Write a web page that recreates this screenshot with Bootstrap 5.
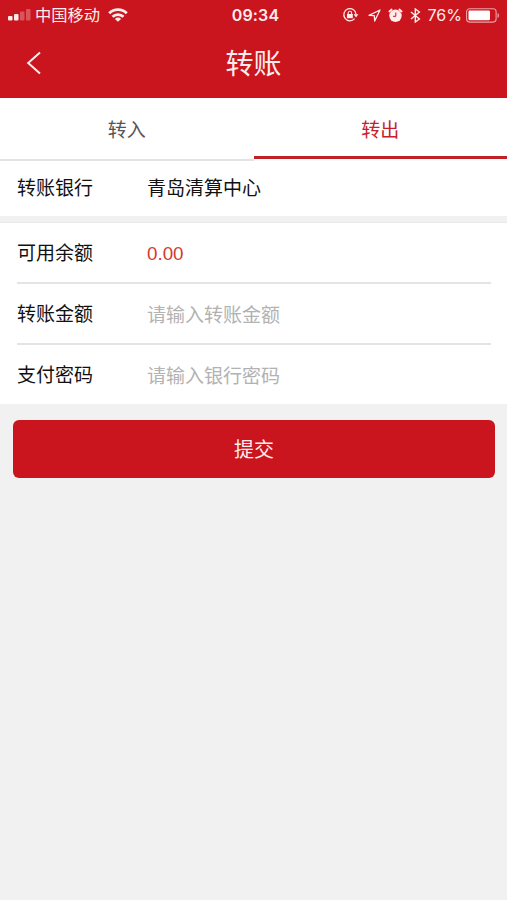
<!DOCTYPE html>
<html lang="zh-CN">
<head>
<meta charset="utf-8">
<meta name="viewport" content="width=device-width, initial-scale=1">
<title>转账</title>
<link href="https://cdn.jsdelivr.net/npm/bootstrap@5.3.0/dist/css/bootstrap.min.css" rel="stylesheet">
<style>
  :root { --brand: #ca151e; }
  body { background: #f1f1f1; color: #111; font: 400 19px/28px "Liberation Sans", "Noto Sans CJK SC", sans-serif; overflow: hidden; }
  .top-area { background: var(--brand); height: 98px; color: #ffeceb; }
  .status { display: grid; grid-template-columns: 1fr auto 1fr; height: 30px; padding: 0 7px 0 8px; font: 16.3px/30px Inter, "Noto Sans CJK SC", sans-serif; }
  .clock { font-weight: 600; font-size: 16px; padding-left: 3px; letter-spacing: .2px; }
  .status-icons svg { margin-right: 7px; flex: none; }
  .status-icons .rotation-lock { margin-right: 9px; }
  .status-icons .battery { margin: 0 0 0 4px; }
  .percent { font-size: 16px; }
  .title-bar { display: grid; grid-template-columns: 1fr auto 1fr; height: 66px; padding: 0 26px; }
  .title-bar h1 { font-size: 28px; line-height: 40px; font-weight: 400; padding-top: 3px; }
  .tabs { height: 63px; background: #fff; }
  .tabs .nav-link { padding: 5px 0 0; border-radius: 0; color: #555; border-bottom: 2px solid #e3e3e3; }
  .tabs .nav-link.active { color: #c6202f; background: none; border-bottom: 3px solid #c02026; padding: 7px 0 0; margin-bottom: 2px; }
  .bank-row { height: 55px; padding: 0 17px; }
  .field-label { width: 130px; flex: none; }
  .fields { padding: 0 16px 0 17px; margin-top: 6px; border-top: 1px solid #e9e9e9; height: 182px; }
  .field-row { height: 61px; border-bottom: 2px solid #e4e4e4; padding-top: 3px; }
  .field-row:first-child { height: 61px; }
  .field-row:last-child { border: 0; height: 59px; }
  .field-row input { font-size: 19px; line-height: 28px; height: 28px; margin-top: 2px; color: #111; }
  .field-row input::placeholder { color: #b2b2b2; opacity: 1; }
  .balance { color: #d43a2b; font: 18.8px/28px "Liberation Sans", sans-serif; }
  .submit-btn { height: 58px; margin: 16px 12px 0 13px; padding: 2px 0 0; background: var(--brand); color: #ffeceb; border-radius: 6px; font-size: 20px; border: 0; width: calc(100% - 25px); }
  .submit-btn:hover { background: #b5121a; color: #fff; }
</style>
<script src="https://cdn.jsdelivr.net/npm/bootstrap@5.3.0/dist/js/bootstrap.bundle.min.js"></script>
</head>
<body>
<header class="top-area">
  <div class="status">
    <div class="d-flex align-items-center">
      <svg width="23" height="12" viewBox="0 0 23 12" fill="currentColor"><rect x="0" y="7" width="4.5" height="4.5" rx="1"/><rect x="6" y="5" width="4.5" height="6.5" rx="1"/><rect x="12" y="2.5" width="4.5" height="9" rx="1" opacity=".3"/><rect x="18" y="0" width="4.5" height="11.5" rx="1" opacity=".3"/></svg>
      <span class="ms-1">中国移动</span>
      <svg class="ms-2" width="20" height="14" viewBox="0 0 20 14" fill="none" stroke="currentColor" stroke-width="2.8"><path d="M1.2 5.2a12.6 12.6 0 0 1 17.6 0M4.5 8.8a7.8 7.8 0 0 1 11 0"/><path d="M10 13.8 6.9 10.9a4.4 4.4 0 0 1 6.2 0z" fill="currentColor" stroke="none"/></svg>
    </div>
    <div class="clock">09:34</div>
    <div class="status-icons d-flex align-items-center justify-content-end">
      <svg class="rotation-lock" width="17" height="16" viewBox="0 0 17 16" fill="none" stroke="currentColor" stroke-width="1.3"><path d="M12.6 11.6A6.1 6.1 0 1 1 14 7.2"/><path d="M11.6 7.2h4.8l-2.4 3.2z" fill="currentColor" stroke="none"/><rect x="5" y="7" width="5.8" height="4.2" fill="currentColor" stroke="none"/><path d="M6.2 7.4V6a1.7 1.7 0 0 1 3.4 0v1.4" stroke-width="1.1"/></svg>
      <svg width="13" height="13" viewBox="0 0 13 13" fill="none" stroke="currentColor" stroke-width="1.3" stroke-linejoin="round"><path d="M12 1 1 6.3l5.3.3.4 5.4z"/></svg>
      <svg width="15" height="15" viewBox="0 0 15 15"><path d="M1.4 3.5 3.6 1.5M13.6 3.5 11.4 1.5" stroke="currentColor" stroke-width="1.8" stroke-linecap="round"/><circle cx="7.5" cy="7.8" r="6.2" fill="currentColor"/><path d="M7.8 4.5v3.8H5" fill="none" stroke="#ca151e" stroke-width="1"/></svg>
      <svg width="11" height="15" viewBox="0 0 11 15" fill="none" stroke="currentColor" stroke-width="1.4"><path d="m1 4 8.4 7L5.3 14V1l4.1 3L1 11"/></svg>
      <span class="percent">76%</span>
      <svg class="battery" width="34" height="15" viewBox="0 0 34 15"><rect x=".6" y=".7" width="29.5" height="13.4" rx="3" fill="none" stroke="currentColor" stroke-width="1.1" opacity=".65"/><rect x="2.5" y="2.6" width="21.5" height="9.6" rx="1.2" fill="#fff"/><path d="M31.5 5v5c2.2-.9 2.2-4.1 0-5z" fill="currentColor" opacity=".6"/></svg>
    </div>
  </div>
  <div class="title-bar align-items-center">
    <a href="#" class="text-reset d-flex" aria-label="返回"><svg width="16" height="24" viewBox="0 0 16 24" fill="none" stroke="currentColor" stroke-width="2"><path d="M14 1.5 2.2 12 14 22.5"/></svg></a>
    <h1 class="m-0">转账</h1>
  </div>
</header>
<nav class="nav nav-justified tabs">
  <a class="nav-link d-flex align-items-center justify-content-center" href="#">转入</a>
  <a class="nav-link active d-flex align-items-center justify-content-center" href="#">转出</a>
</nav>
<main>
  <section class="bank-row bg-white d-flex align-items-center"><span class="field-label">转账银行</span><span>青岛清算中心</span></section>
  <form class="fields-form">
    <div class="fields bg-white">
      <div class="field-row d-flex align-items-center"><span class="field-label">可用余额</span><span class="balance">0.00</span></div>
      <div class="field-row d-flex align-items-center"><label class="field-label" for="amount">转账金额</label><input id="amount" class="form-control-plaintext p-0" placeholder="请输入转账金额"></div>
      <div class="field-row d-flex align-items-center"><label class="field-label" for="pwd">支付密码</label><input id="pwd" type="password" class="form-control-plaintext p-0" placeholder="请输入银行密码"></div>
    </div>
    <button type="button" class="btn submit-btn">提交</button>
  </form>
</main>
</body>
</html>
